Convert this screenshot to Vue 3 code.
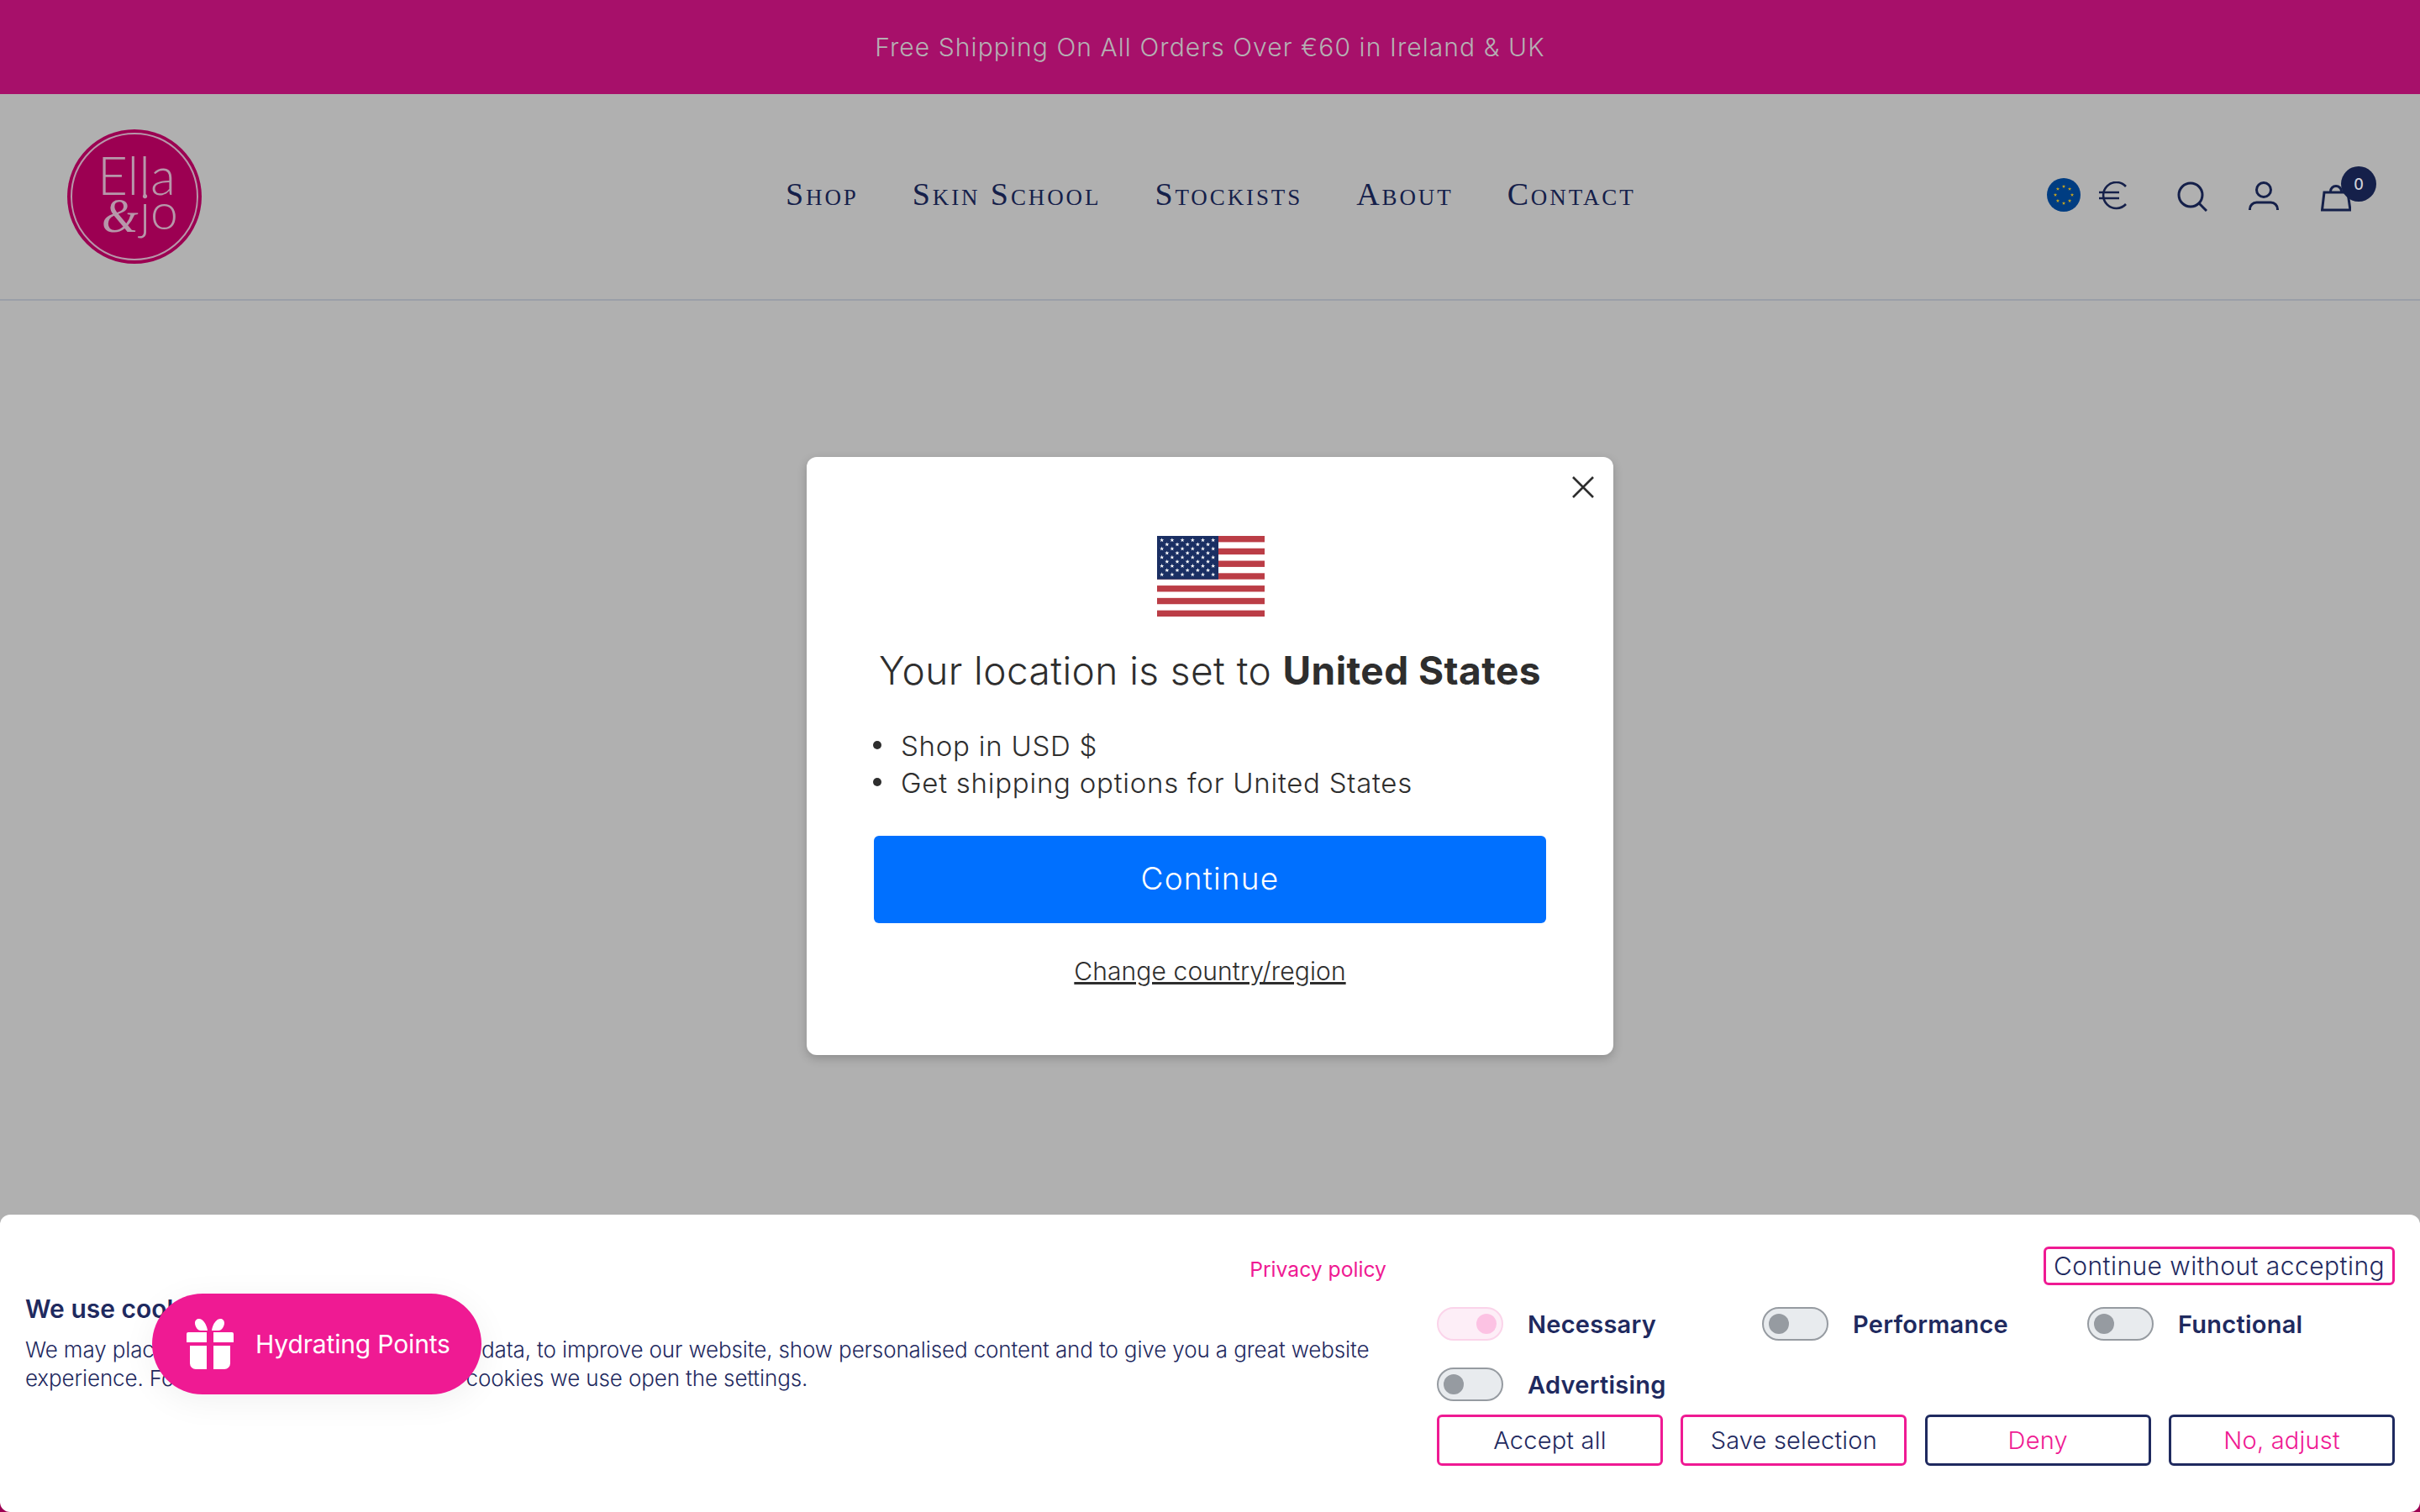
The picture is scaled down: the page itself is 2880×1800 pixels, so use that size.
<script setup>
const nav = ['Shop', 'Skin School', 'Stockists', 'About', 'Contact']
const toggles = [
  { label: 'Necessary', on: true },
  { label: 'Performance', on: false },
  { label: 'Functional', on: false },
  { label: 'Advertising', on: false }
]
const buttons = [
  { label: 'Accept all', kind: 'primary' },
  { label: 'Save selection', kind: 'primary' },
  { label: 'Deny', kind: 'secondary' },
  { label: 'No, adjust', kind: 'secondary' }
]
const starPath = (cx, cy, r) => {
  const pts = []
  for (let i = 0; i < 10; i++) {
    const rad = i % 2 ? r * 0.4 : r
    const a = -Math.PI / 2 + (i * Math.PI) / 5
    pts.push(`${(cx + rad * Math.cos(a)).toFixed(2)},${(cy + rad * Math.sin(a)).toFixed(2)}`)
  }
  return pts.join(' ')
}
const usStars = []
for (let row = 0; row < 9; row++) {
  const odd = row % 2 === 1
  const count = odd ? 5 : 6
  for (let c = 0; c < count; c++) {
    usStars.push(starPath(5.7 + (odd ? 6.1 : 0) + c * 12.2, 5 + row * 5.13, 2.7))
  }
}
const usStripes = [0, 2, 4, 6, 8, 10, 12].map((i) => i * 7.385)
const euStars = []
for (let i = 0; i < 8; i++) {
  const a = (i * Math.PI) / 4 - Math.PI / 2
  euStars.push(starPath(20 + 10 * Math.cos(a), 20 + 10 * Math.sin(a), 2.3))
}
</script>

<template>
  <div class="page">
    <div class="topbar">Free Shipping On All Orders Over €60 in Ireland &amp; UK</div>
    <header class="header">
      <svg class="logo" width="160" height="160" viewBox="0 0 160 160">
        <circle cx="80" cy="80" r="80" fill="#9c0052" />
        <circle cx="80" cy="80" r="75" fill="none" stroke="#b797aa" stroke-width="2" />
        <text x="36" y="78" class="logo-a" textLength="93" lengthAdjust="spacingAndGlyphs">Ella</text>
        <text x="41" y="122" class="logo-amp">&amp;</text>
        <text x="86" y="119" class="logo-b" textLength="46" lengthAdjust="spacingAndGlyphs">jo</text>
      </svg>
      <nav class="nav">
        <a v-for="n in nav" :key="n" class="nav-link">{{ n }}</a>
      </nav>
      <div class="actions">
        <svg class="flag-eu" width="40" height="40" viewBox="0 0 40 40">
          <circle cx="20" cy="20" r="20" fill="#003d82" />
          <polygon v-for="(s, i) in euStars" :key="i" :points="s" fill="#c8a51e" />
        </svg>
        <svg class="euro" width="34" height="34" viewBox="0 0 34 34" fill="none" stroke="#15204a" stroke-width="2.600">
          <path d="M33 6A15.500 15.500 0 1 0 33 27" />
          <path d="M1 13h24M1 20h24" />
        </svg>
        <svg class="search" width="36" height="36" viewBox="0 0 36 36" fill="none" stroke="#15204a" stroke-width="3">
          <circle cx="16" cy="16" r="14" />
          <path d="M26 26l9 9" />
        </svg>
        <svg class="user" width="36" height="36" viewBox="0 0 36 36" fill="none" stroke="#15204a" stroke-width="3">
          <circle cx="18" cy="10" r="8.500" />
          <path d="M1.500 34v-1a8 8 0 0 1 8-8h17a8 8 0 0 1 8 8v1" />
        </svg>
        <div class="cart">
          <svg width="36" height="36" viewBox="0 0 36 36" fill="none" stroke="#15204a" stroke-width="3">
            <path d="M4 13h28l3 21H1.500z" />
            <path d="M11.500 12a6.500 6.500 0 0 1 13 0" />
          </svg>
          <span class="badge">0</span>
        </div>
      </div>
    </header>

    <section class="modal">
      <svg class="close" width="26" height="26" viewBox="0 0 26 26" fill="none" stroke="#2e2e2e" stroke-width="2.600">
        <path d="M1 1l24 24M25 1L1 25" />
      </svg>
      <svg class="flag-us" width="128" height="96" viewBox="0 0 128 96">
        <rect width="128" height="96" fill="#fff" />
        <rect v-for="y in usStripes" :key="y" x="0" :y="y" width="128" height="7.385" fill="#bb3d46" />
        <rect width="73" height="51.700" fill="#1a2f63" />
        <polygon v-for="(s, i) in usStars" :key="i" :points="s" fill="#fff" />
      </svg>
      <h2 class="modal-title">Your location is set to <strong>United States</strong></h2>
      <ul class="modal-list">
        <li>Shop in USD $</li>
        <li>Get shipping options for United States</li>
      </ul>
      <button class="continue">Continue</button>
      <a class="change">Change country/region</a>
    </section>

    <div class="footer-strip"></div>
    <section class="cookie">
      <div class="cookie-left">
        <a class="privacy">Privacy policy</a>
        <h3 class="cookie-title">We use cookies</h3>
        <p class="cookie-text">We may place cookies to collect and analyse data, to improve our website, show personalised content and to give you a great website<br />experience. For more information about the cookies we use open the settings.</p>
      </div>
      <div class="cookie-right">
        <div class="cookie-top"><button class="without">Continue without accepting</button></div>
        <div class="toggle-grid">
          <label v-for="t in toggles" :key="t.label" class="toggle-item">
            <span class="toggle" :class="{ on: t.on }"><span class="knob"></span></span>
            <span class="toggle-label">{{ t.label }}</span>
          </label>
        </div>
        <div class="button-row">
          <button v-for="b in buttons" :key="b.label" class="cbtn" :class="b.kind">{{ b.label }}</button>
        </div>
      </div>
    </section>

    <div class="points">
      <svg width="56" height="60" viewBox="0 0 56 60" fill="#fff">
        <path d="M15 0c4 0 9 6 10 14H17C13 14 10 9 10 5c0-3 2-5 5-5zM40 0c3 0 5 2 5 5 0 4-3 9-7 9h-8c1-8 6-14 10-14z" />
        <path d="M2 16h22v12H0V18a2 2 0 0 1 2-2zM32 16h22a2 2 0 0 1 2 2v10H32zM4 32h20v28H11a7 7 0 0 1-7-7zM32 32h20v21a7 7 0 0 1-7 7H32z" />
      </svg>
      <span>Hydrating Points</span>
    </div>
  </div>
</template>

<style>
html, body { margin: 0; background: #b0b0b0; }
</style>

<style scoped>
.page {
  position: relative;
  width: 2880px;
  height: 1800px;
  overflow: hidden;
  background: #b0b0b0;
  font-family: Inter, "Noto Sans", sans-serif;
  color: #1f2a5f;
}
.topbar {
  height: 112px;
  background: #a7106a;
  color: #b5b0b3;
  display: flex;
  align-items: center;
  justify-content: center;
  font-size: 30px;
  font-weight: 300;
  letter-spacing: 1.08px;
}
.header {
  height: 244px;
  border-bottom: 2px solid #9a9fa8;
  display: flex;
  align-items: center;
  padding: 0 82px 0 80px;
}
.logo { flex: none; }
.logo-a { font: 300 64px Lato, sans-serif; fill: #b797aa; }
.logo-amp { font: italic 56px "Liberation Serif", serif; fill: #b797aa; }
.logo-b { font: 300 60px Lato, sans-serif; fill: #b797aa; }
.nav {
  margin-left: 695px;
  margin-top: -7px;
  display: flex;
  gap: 64px;
}
.nav-link {
  font-family: "Liberation Serif", serif;
  font-variant: small-caps;
  font-size: 38px;
  letter-spacing: 2.9px;
  color: #15204a;
}
.actions {
  margin-left: auto;
  display: flex;
  align-items: center;
}
.flag-eu { margin-top: -4px; }
.euro { margin-left: 21px; margin-top: -3px; }
.search { margin-left: 60px; }
.user { margin-left: 49px; }
.cart { margin-left: 50px; position: relative; height: 36px; }
.badge {
  position: absolute;
  left: 24px;
  top: -18px;
  width: 42px;
  height: 42px;
  border-radius: 50%;
  background: #15204a;
  color: #cfd0d6;
  font-size: 18px;
  font-weight: 500;
  display: flex;
  align-items: center;
  justify-content: center;
}
.modal {
  position: absolute;
  left: 960px;
  top: 544px;
  width: 960px;
  height: 712px;
  box-sizing: border-box;
  background: #fff;
  border-radius: 12px;
  box-shadow: 0 4px 12px rgba(0, 0, 0, 0.2);
  padding: 94px 80px 0;
  display: flex;
  flex-direction: column;
  align-items: center;
  color: #2e2e2e;
}
.close { position: absolute; right: 23px; top: 23px; }
.flag-us { display: block; margin-left: 2px; }
.modal-title {
  margin: 34px 0 0;
  font-size: 46px;
  line-height: 60px;
  font-weight: 300;
  letter-spacing: 0.43px;
  white-space: nowrap;
}
.modal-title strong { font-weight: 700; }
.modal-list {
  align-self: stretch;
  list-style: none;
  margin: 38px 0 0;
  padding: 0 0 0 32px;
  font-size: 33px;
  line-height: 44px;
  font-weight: 300;
  letter-spacing: 0.75px;
}
.modal-list li { position: relative; }
.modal-list li::before {
  content: "";
  position: absolute;
  left: -33px;
  top: 16px;
  width: 10px;
  height: 10px;
  border-radius: 50%;
  background: #2e2e2e;
}
.continue {
  margin-top: 41px;
  width: 800px;
  height: 104px;
  padding: 0 0 3px;
  border: 0;
  border-radius: 6px;
  background: #0070ff;
  color: #fff;
  font: 300 37px Inter, sans-serif;
  letter-spacing: 1.2px;
}
.change {
  margin-top: 39px;
  font-size: 30px;
  font-weight: 300;
  letter-spacing: 0.1px;
  text-decoration: underline;
}
.footer-strip {
  position: absolute;
  left: 0;
  right: 0;
  bottom: 0;
  height: 20px;
  background: #9c0052;
}
.cookie {
  position: absolute;
  left: 0;
  right: 0;
  bottom: 0;
  height: 354px;
  background: #fff;
  border-radius: 12px;
  display: flex;
  box-sizing: border-box;
  padding: 38px 30px 0;
}
.cookie-left { width: 1620px; display: flex; flex-direction: column; }
.privacy {
  align-self: flex-end;
  margin-top: 12px;
  font-size: 24.700px;
  color: #ef1a93;
}
.cookie-title {
  margin: 14px 0 0;
  font-size: 30px;
  font-weight: 600;
}
.cookie-text {
  margin: 14px 0 0;
  font-size: 26px;
  line-height: 34px;
  font-weight: 300;
  letter-spacing: -0.12px;
  white-space: nowrap;
}
.cookie-right { margin-left: 60px; width: 1140px; }
.cookie-top { display: flex; justify-content: flex-end; }
.without {
  height: 46px;
  width: 418px;
  padding: 0;
  background: #fff;
  border: 3px solid #ef1a93;
  border-radius: 6px;
  color: #1f2a5f;
  font: 300 30px Inter, sans-serif;
  letter-spacing: 0.45px;
}
.toggle-grid {
  margin-top: 26px;
  display: grid;
  grid-template-columns: repeat(3, 387px);
  row-gap: 32px;
}
.toggle-item { display: flex; align-items: center; gap: 29px; height: 40px; }
.toggle {
  width: 79px;
  height: 40px;
  box-sizing: border-box;
  border: 2px solid #969ba1;
  border-radius: 20px;
  background: #e8ebee;
  display: flex;
  align-items: center;
  padding: 0 6px;
}
.toggle .knob { width: 24px; height: 24px; border-radius: 50%; background: #969ba1; }
.toggle.on { background: #fdeef7; border-color: #fbd4ea; justify-content: flex-end; }
.toggle.on .knob { background: #fcc2e3; }
.toggle-label { font-size: 29px; font-weight: 600; letter-spacing: 0.25px; }
.button-row {
  margin-top: 16px;
  display: flex;
  gap: 21.500px;
}
.cbtn {
  width: 269px;
  height: 61px;
  background: #fff;
  border-radius: 6px;
  font: 300 29px Inter, sans-serif;
  letter-spacing: 0.2px;
  box-sizing: border-box;
}
.cbtn.primary { border: 3px solid #ef1a93; color: #1f2a5f; }
.cbtn.secondary { border: 3px solid #1f2a5f; color: #ef1a93; }
.points {
  position: absolute;
  left: 181px;
  top: 1540px;
  width: 392px;
  height: 120px;
  box-sizing: border-box;
  padding-left: 41px;
  border-radius: 60px;
  background: #ef1a93;
  color: #fff;
  font-size: 30px;
  letter-spacing: -0.15px;
  display: flex;
  align-items: center;
  gap: 26px;
  box-shadow: 0 8px 40px rgba(0, 0, 0, 0.06);
}
</style>
